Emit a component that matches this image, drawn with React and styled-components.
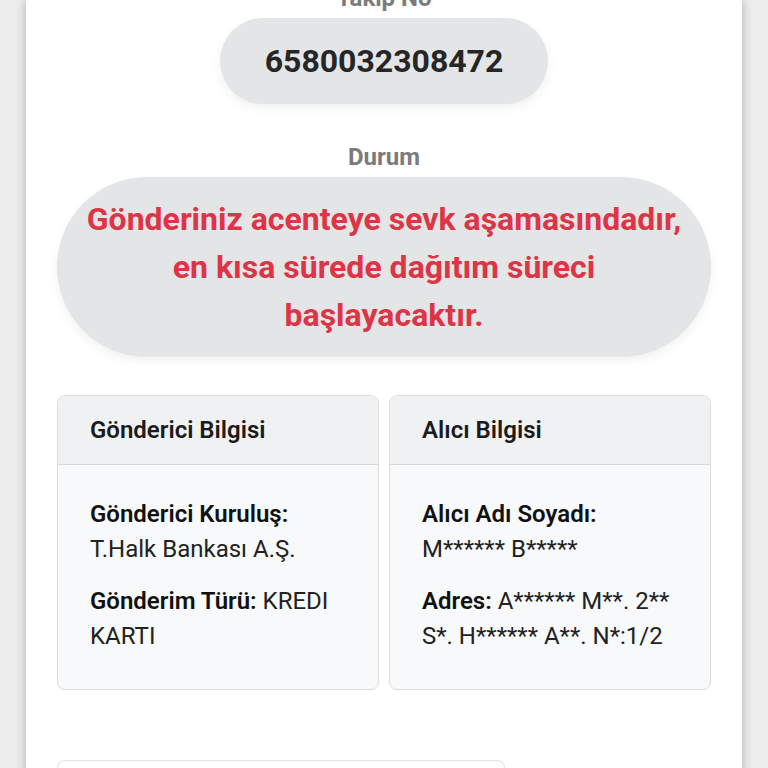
import React from "react";
import styled, { createGlobalStyle } from "styled-components";

const Global = createGlobalStyle`
  html, body { margin: 0; padding: 0; background: #ededed; }
  body { font-family: Roboto, "Noto Sans", Arial, sans-serif; color: #212529; }
  * { box-sizing: border-box; }
`;

const Page = styled.div`
  height: 768px;
  overflow: hidden;
  padding: 0 26px;
`;

const Panel = styled.main`
  background: #fff;
  min-height: 100%;
  box-shadow: 0 0 10px rgba(0, 0, 0, 0.28);
  padding: 0 31px;
  display: flex;
  flex-direction: column;
  align-items: center;
`;

const Label = styled.div`
  font-size: 24px;
  font-weight: 700;
  color: #7b7b7b;
  line-height: 24px;
  text-align: center;
  margin-top: ${(p) => p.$top || 0}px;
  margin-bottom: 8px;
`;

const Pill = styled.div`
  background: #e4e5e7;
  border-radius: 999px;
  box-shadow: 0 4px 10px rgba(0, 0, 0, 0.06);
  text-align: center;
  font-weight: 700;
`;

const TrackPill = styled(Pill)`
  width: 328px;
  height: 86px;
  display: flex;
  align-items: center;
  justify-content: center;
  font-size: 32px;
  color: #262626;
`;

const StatusPill = styled(Pill)`
  width: 100%;
  border-radius: 90px;
  padding: 18px 24px;
  font-size: 32px;
  line-height: 48px;
  color: #dc3545;
`;

const Cards = styled.section`
  width: 100%;
  display: grid;
  grid-template-columns: 1fr 1fr;
  gap: 10px;
  margin-top: 38px;
`;

const Card = styled.div`
  background: #f8f9fa;
  border: 1px solid #dcdcdc;
  border-radius: 8px;
  overflow: hidden;
  display: flex;
  flex-direction: column;
`;

const CardHeader = styled.div`
  background: #f0f1f3;
  border-bottom: 1px solid #d8d8d8;
  height: 69px;
  padding: 0 32px;
  display: flex;
  align-items: center;
  font-size: 24px;
  font-weight: 600;
  color: #1b1b1b;
`;

const CardBody = styled.div`
  padding: 32px 32px 35px;
`;

const Field = styled.p`
  margin: 0 0 17px;
  font-size: 24px;
  line-height: 35px;
  color: #222;
  &:last-child { margin-bottom: 0; }
  b { font-weight: 600; color: #111; }
`;

const NextCard = styled.div`
  align-self: flex-start;
  width: 448px;
  height: 40px;
  margin-top: 70px;
  border: 1px solid #e3e3e3;
  border-bottom: none;
  border-radius: 8px 8px 0 0;
  background: #fff;
`;

export default function App() {
  return (
    <Page>
      <Global />
      <Panel>
        <Label $top={-14}>Takip No</Label>
        <TrackPill>6580032308472</TrackPill>
        <Label $top={41}>Durum</Label>
        <StatusPill>
          Gönderiniz acenteye sevk aşamasındadır, en kısa sürede dağıtım süreci başlayacaktır.
        </StatusPill>
        <Cards>
          <Card>
            <CardHeader>Gönderici Bilgisi</CardHeader>
            <CardBody>
              <Field><b>Gönderici Kuruluş:</b> T.Halk Bankası A.Ş.</Field>
              <Field><b>Gönderim Türü:</b> KREDI KARTI</Field>
            </CardBody>
          </Card>
          <Card>
            <CardHeader>Alıcı Bilgisi</CardHeader>
            <CardBody>
              <Field><b>Alıcı Adı Soyadı:</b> M****** B*****</Field>
              <Field><b>Adres:</b> A****** M**. 2** S*. H****** A**. N*:1/2</Field>
            </CardBody>
          </Card>
        </Cards>
        <NextCard />
      </Panel>
    </Page>
  );
}
